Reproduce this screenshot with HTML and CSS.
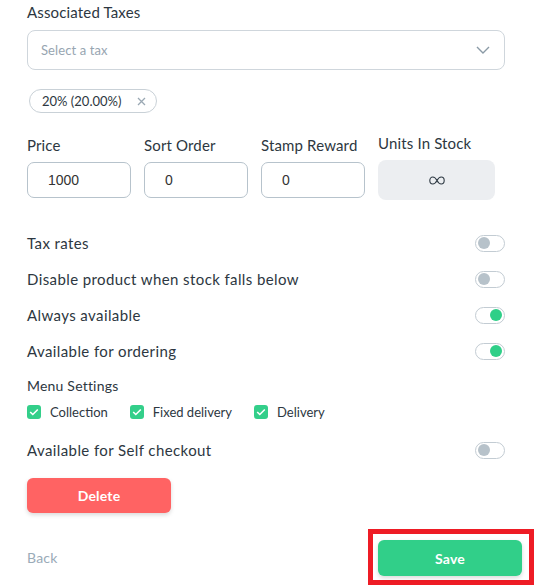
FILE: index.html
```html
<!DOCTYPE html>
<html>
<head>
<meta charset="utf-8">
<link rel="stylesheet" href="styles.css">
</head>
<body>
<div class="page">
  <div class="label top-label">Associated Taxes</div>
  <div class="select">
    <span class="placeholder">Select a tax</span>
    <svg class="chevron" width="14" height="8" viewBox="0 0 14 8"><polyline points="1,1 7,7 13,1" fill="none" stroke="#8a9aa6" stroke-width="1.4"/></svg>
  </div>
  <div class="chip-row">
    <span class="chip">20% (20.00%)
      <svg class="chip-x" width="9" height="9" viewBox="0 0 9 9"><path d="M1 1L8 8M8 1L1 8" stroke="#9aa8b3" stroke-width="1.3"/></svg>
    </span>
  </div>
  <div class="fields">
    <div class="field">
      <div class="label">Price</div>
      <div class="input">1000</div>
    </div>
    <div class="field">
      <div class="label">Sort Order</div>
      <div class="input">0</div>
    </div>
    <div class="field">
      <div class="label">Stamp Reward</div>
      <div class="input">0</div>
    </div>
    <div class="field">
      <div class="label">Units In Stock</div>
      <div class="stock">
        <svg width="16" height="9" viewBox="0 0 16 9"><path d="M8 4.5C6.7 2 5.2 1 3.8 1C2 1 0.8 2.6 0.8 4.5C0.8 6.4 2 8 3.8 8C5.2 8 6.7 7 8 4.5C9.3 2 10.8 1 12.2 1C14 1 15.2 2.6 15.2 4.5C15.2 6.4 14 8 12.2 8C10.8 8 9.3 7 8 4.5Z" fill="none" stroke="#2f3a44" stroke-width="1.1"/></svg>
      </div>
    </div>
  </div>
  <div class="toggles">
    <div class="row"><span>Tax rates</span><span class="toggle"><span class="knob"></span></span></div>
    <div class="row"><span>Disable product when stock falls below</span><span class="toggle"><span class="knob"></span></span></div>
    <div class="row"><span>Always available</span><span class="toggle on"><span class="knob"></span></span></div>
    <div class="row"><span>Available for ordering</span><span class="toggle on"><span class="knob"></span></span></div>
  </div>
  <div class="menu-label">Menu Settings</div>
  <div class="checks">
    <span class="check"><span class="box"><svg width="10" height="8" viewBox="0 0 10 8"><polyline points="1.2,4 3.8,6.5 8.8,1.5" fill="none" stroke="#fff" stroke-width="1.6"/></svg></span>Collection</span>
    <span class="check"><span class="box"><svg width="10" height="8" viewBox="0 0 10 8"><polyline points="1.2,4 3.8,6.5 8.8,1.5" fill="none" stroke="#fff" stroke-width="1.6"/></svg></span>Fixed delivery</span>
    <span class="check"><span class="box"><svg width="10" height="8" viewBox="0 0 10 8"><polyline points="1.2,4 3.8,6.5 8.8,1.5" fill="none" stroke="#fff" stroke-width="1.6"/></svg></span>Delivery</span>
  </div>
  <div class="row self"><span>Available for Self checkout</span><span class="toggle"><span class="knob"></span></span></div>
  <button class="btn delete">Delete</button>
  <div class="footer">
    <span class="back">Back</span>
    <span class="highlight"><button class="btn save">Save</button></span>
  </div>
</div>
</body>
</html>
```

FILE: styles.css
```css
* { box-sizing: border-box; }
html, body { margin: 0; padding: 0; background: #fff; }
body { font-family: "Lato", "Liberation Sans", sans-serif; color: #2d3741; overflow: hidden; }
.page { padding: 2px 0 0 27px; width: 505px; }
.label { font-size: 15px; line-height: 20px; color: #2d3741; letter-spacing: 0.15px; }
.select {
  margin-top: 8px; height: 40px; width: 478px;
  border: 1px solid #cfd6dc; border-radius: 8px;
  display: flex; align-items: center; justify-content: space-between;
  padding: 0 14px 0 13px;
}
.placeholder { font-size: 13px; color: #97a5b1; letter-spacing: 0.1px; }
.chip-row { margin-top: 19px; display: flex; }
.chip {
  margin-left: 2px; height: 24px; width: 128px;
  border: 1px solid #c9d1d7; border-radius: 12px;
  display: flex; align-items: center; justify-content: space-between;
  padding: 0 10px 0 12px; font-size: 13px; color: #2d3741;
}
.fields {
  margin-top: 20px; display: grid;
  grid-template-columns: 104px 104px 104px 117px; column-gap: 13px;
  align-items: center;
}
.field { display: flex; flex-direction: column; gap: 7px; }
.input {
  height: 36px; border: 1px solid #b7c3cc; border-radius: 7px;
  padding-left: 20px; display: flex; align-items: center;
  font-family: "Liberation Sans", sans-serif; font-size: 14px; color: #333;
}
.stock {
  height: 40px; background: #eceef1; border-radius: 8px;
  display: flex; align-items: center; justify-content: center;
}
.toggles { margin-top: 25px; width: 478px; }
.row {
  height: 36px; display: flex; align-items: center; justify-content: space-between;
  font-size: 15px; width: 478px; letter-spacing: 0.4px;
}
.toggle {
  width: 30px; height: 17px; border: 1px solid #c3ccd3; border-radius: 9px;
  background: #fff; display: flex; align-items: center; padding: 0 2px;
}
.knob { width: 12px; height: 12px; border-radius: 50%; background: #b7c2ca; }
.toggle.on { justify-content: flex-end; }
.toggle.on .knob { background: #2fcf88; }
.menu-label { margin-top: 7px; font-size: 14px; line-height: 20px; letter-spacing: 0.2px; }
.checks { margin-top: 6px; display: flex; height: 20px; align-items: center; }
.check { display: flex; align-items: center; font-size: 13px; margin-right: 22px; }
.check .box {
  width: 14px; height: 14px; border-radius: 3px; background: #33cf8a;
  display: flex; align-items: center; justify-content: center; margin-right: 9px;
}
.self { margin-top: 10px; }
.btn {
  border: none; color: #fff; font-family: "Lato", sans-serif;
  font-size: 14px; font-weight: 700; border-radius: 6px; letter-spacing: 0.2px;
  width: 144px; height: 35px; box-shadow: 0 2px 4px rgba(0,0,0,0.15);
}
.delete { margin-top: 10px; background: #ff6363; display: block; }
.footer {
  margin-top: 16px; width: 507px; display: flex; align-items: center; justify-content: space-between;
}
.back { font-size: 14px; color: #9aabb8; letter-spacing: 0.2px; }
.highlight { border: 5px solid #ee1c25; padding: 6px 7px 4px 5px; display: flex; }
.save { background: #31cf89; height: 36px; }
```
